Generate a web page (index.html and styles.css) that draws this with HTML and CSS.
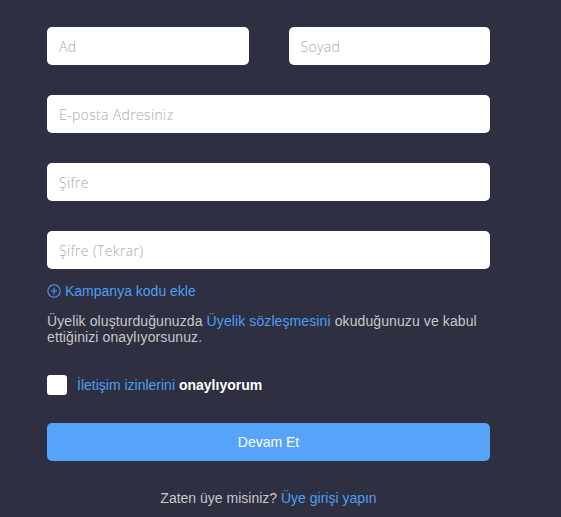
FILE: index.html
```
<!DOCTYPE html>
<html lang="tr">
<head>
<meta charset="utf-8">
<title>Üye Ol</title>
<link rel="stylesheet" href="styles.css">
</head>
<body>
<form class="form">
  <div class="row two">
    <input class="field" type="text" placeholder="Ad">
    <input class="field" type="text" placeholder="Soyad">
  </div>
  <div class="row"><input class="field" type="email" placeholder="E-posta Adresiniz"></div>
  <div class="row"><input class="field" type="password" placeholder="Şifre"></div>
  <div class="row"><input class="field" type="password" placeholder="Şifre (Tekrar)"></div>
  <a class="promo" href="#">
    <svg class="plus" width="14" height="14" viewBox="0 0 14 14"><circle cx="7" cy="7" r="6.2" fill="none" stroke="currentColor" stroke-width="1.1"/><path d="M7 3.8v6.4M3.8 7h6.4" stroke="currentColor" stroke-width="1.1"/></svg>
    <span>Kampanya kodu ekle</span>
  </a>
  <p class="terms">Üyelik oluşturduğunuzda <a href="#">Üyelik sözleşmesini</a> okuduğunuzu ve kabul ettiğinizi onaylıyorsunuz.</p>
  <label class="consent">
    <span class="box"></span>
    <span><a href="#">İletişim izinlerini</a> <b>onaylıyorum</b></span>
  </label>
  <button class="submit" type="button">Devam Et</button>
  <p class="login">Zaten üye misiniz? <a href="#">Üye girişi yapın</a></p>
</form>
</body>
</html>
```
FILE: styles.css
```
html, body {
  margin: 0;
  padding: 0;
  background: #2e2f40;
}
body {
  font-family: "Liberation Sans", Arial, sans-serif;
  font-size: 14px;
  color: #c8c8cc;
}
.form {
  width: 443px;
  padding: 27px 0 0 47px;
  display: flex;
  flex-direction: column;
}
.row {
  display: flex;
  margin-bottom: 30px;
}
.row.two {
  gap: 40px;
}
.row:nth-child(4) {
  margin-bottom: 0;
}
.field {
  flex: 1;
  min-width: 0;
  height: 38px;
  box-sizing: border-box;
  border: none;
  border-radius: 5px;
  background: #fff;
  padding: 0 12px;
  font-family: "Open Sans", sans-serif;
  font-weight: 300;
  font-size: 14px;
  letter-spacing: 0.35px;
  color: #333;
  outline: none;
}
.field::placeholder {
  color: #aaaaaa;
}
a {
  color: #4d9ff7;
  text-decoration: none;
}
.promo {
  display: flex;
  align-items: center;
  gap: 4px;
  margin-top: 12px;
  height: 20px;
  line-height: 20px;
  font-size: 14px;
  width: max-content;
}
.plus {
  display: block;
}
.terms {
  margin: 12px 0 0;
  line-height: 16px;
  letter-spacing: 0.1px;
}
.consent {
  display: flex;
  align-items: center;
  gap: 10px;
  margin-top: 30px;
  height: 20px;
}
.box {
  width: 20px;
  height: 20px;
  background: #fff;
  border-radius: 3px;
  flex: none;
}
.consent b {
  color: #fff;
}
.submit {
  margin-top: 28px;
  height: 38px;
  border: none;
  border-radius: 5px;
  background: #55a4fa;
  color: #fff;
  font-family: "Liberation Sans", Arial, sans-serif;
  font-size: 14px;
}
.login {
  margin: 27px 0 0;
  text-align: center;
  line-height: 20px;
}
```
